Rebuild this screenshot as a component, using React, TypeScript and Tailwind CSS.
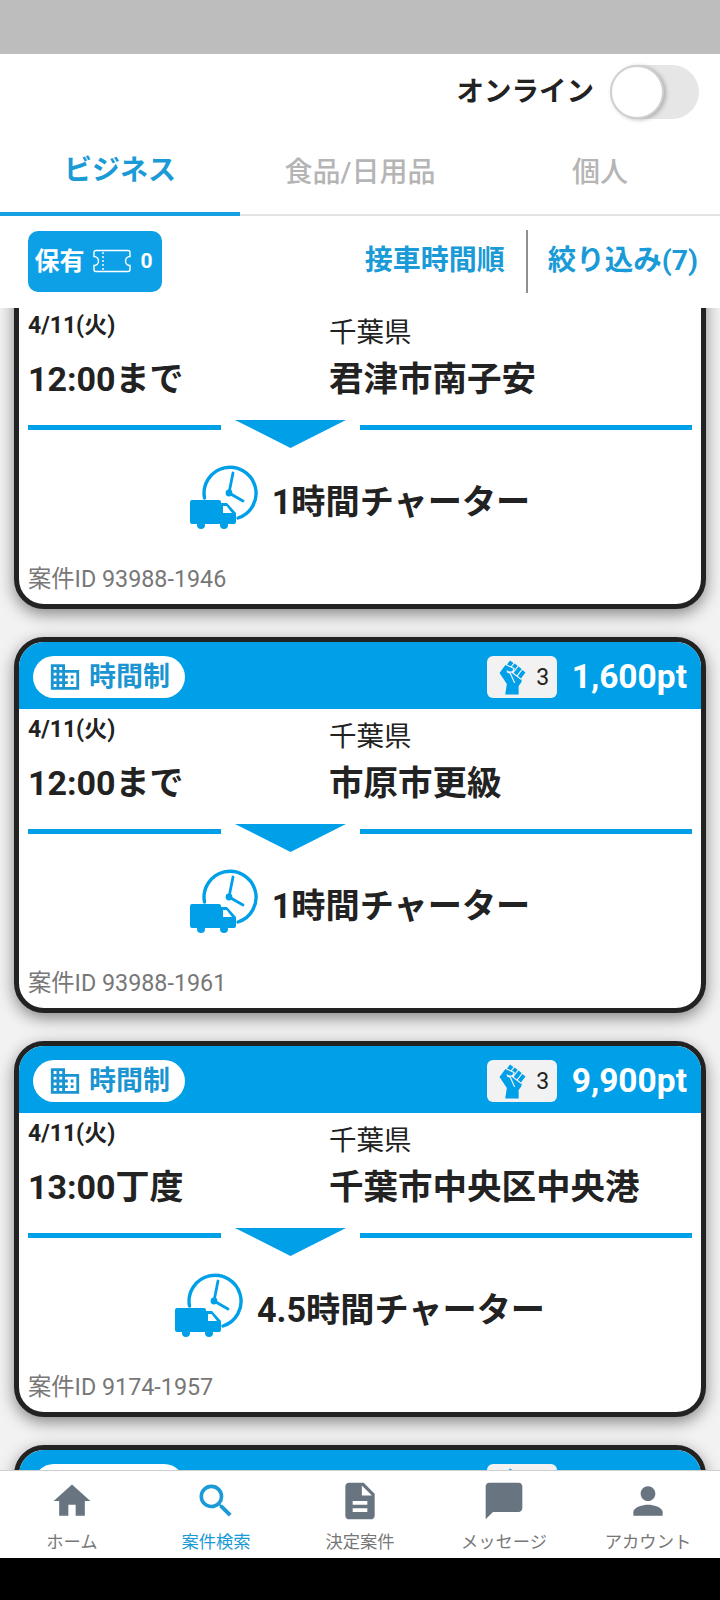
import React from "react";
import { GiFist } from "react-icons/gi";
import {
  MdChatBubble,
  MdDescription,
  MdDomain,
  MdHome,
  MdPerson,
  MdSearch,
} from "react-icons/md";

const FONT = `font-['Roboto','Noto_Sans_CJK_JP',sans-serif]`;

type Job = {
  id: string;
  points: string;
  time: string;
  city: string;
  duration: string;
};

const jobs: Job[] = [
  { id: "93988-1946", points: "1,600pt", time: "12:00まで", city: "君津市南子安", duration: "1時間チャーター" },
  { id: "93988-1961", points: "1,600pt", time: "12:00まで", city: "市原市更級", duration: "1時間チャーター" },
  { id: "9174-1957", points: "9,900pt", time: "13:00丁度", city: "千葉市中央区中央港", duration: "4.5時間チャーター" },
  { id: "9174-1958", points: "9,900pt", time: "13:00丁度", city: "千葉市中央区中央港", duration: "4.5時間チャーター" },
];

const navItems = [
  { label: "ホーム", icon: MdHome, active: false },
  { label: "案件検索", icon: MdSearch, active: true },
  { label: "決定案件", icon: MdDescription, active: false },
  { label: "メッセージ", icon: MdChatBubble, active: false },
  { label: "アカウント", icon: MdPerson, active: false },
];

const TicketIcon = () => (
  <svg width="42" height="24" viewBox="0 0 42 24" fill="none" stroke="white" strokeWidth="1.4">
    <path d="M5 1.500h32a2 2 0 0 1 2 2v4a4.500 4.500 0 0 0 0 9v4a2 2 0 0 1-2 2H5a2 2 0 0 1-2-2v-4a4.500 4.500 0 0 0 0-9v-4a2 2 0 0 1 2-2z" />
    <path d="M12 3v18" strokeDasharray="2 2" />
  </svg>
);

const CharterIcon = () => (
  <svg width="70" height="64" viewBox="0 0 70 64" className="shrink-0">
    <path
      d="M14.500 33A26 26 0 1 1 48 53"
      fill="none"
      stroke="#00A0E9"
      strokeWidth="3.400"
      strokeLinecap="round"
    />
    <path
      d="M43 8 L39 28 L53 36"
      fill="none"
      stroke="#00A0E9"
      strokeWidth="2.800"
      strokeLinecap="round"
      strokeLinejoin="round"
    />
    <circle cx="39" cy="28" r="3.400" fill="#00A0E9" />
    <path
      d="M2 35h27a2 2 0 0 1 2 2v1h6l9 10v9a2 2 0 0 1-2 2H2a2 2 0 0 1-2-2V37a2 2 0 0 1 2-2z"
      fill="#00A0E9"
    />
    <path d="M33 41h3.500l5.500 7h-9z" fill="white" />
    <circle cx="11" cy="60" r="4" fill="#00A0E9" />
    <circle cx="34" cy="60" r="4" fill="#00A0E9" />
  </svg>
);

const JobCard = ({ job }: { job: Job }) => (
  <div className="h-[376px] shrink-0 overflow-hidden rounded-[30px] border-[5px] border-[#222] bg-white shadow-[0_5px_16px_rgba(0,0,0,0.45)]">
    <div className="flex h-[67px] items-center justify-between bg-[#00A0E9] px-[14px] pt-[3px]">
      <div className="flex h-[42px] w-[152px] items-center justify-center gap-[7px] rounded-full bg-white text-[#1a95d2]">
        <MdDomain size={34} className="text-[#1a95d2]" />
        <span className="text-[27px] font-bold leading-none">時間制</span>
      </div>
      <div className="flex items-center gap-[15px]">
        <div className="flex h-[42px] w-[70px] items-center justify-center gap-[5px] rounded-[6px] bg-[#f2f2f2]">
          <GiFist size={37} className="text-[#00A0E9]" />
          <span className="text-[23px] leading-none text-[#222]">3</span>
        </div>
        <span className="text-[33.500px] font-bold leading-none text-white">{job.points}</span>
      </div>
    </div>
    <div className="flex h-[115px] px-[9px] text-[#222]">
      <div className="w-[301px] shrink-0">
        <p className="mt-[8px] text-[23px] font-bold leading-[26px]">4/11(火)</p>
        <p className="mt-[20px] text-[34px] font-bold leading-[40px]">{job.time}</p>
      </div>
      <div>
        <p className="mt-[12px] text-[27.500px] leading-[32px]">千葉県</p>
        <p className="mt-[9px] text-[34.500px] font-bold leading-[42px]">{job.city}</p>
      </div>
    </div>
    <div className="flex h-[28px] items-start px-[9px]">
      <div className="mt-[5px] h-[5px] w-[193px] bg-[#00A0E9]" />
      <svg width="111" height="28" viewBox="0 0 111 28" className="mx-[14px] shrink-0">
        <path d="M0 0H111L55.500 28z" fill="#00A0E9" />
      </svg>
      <div className="mt-[5px] h-[5px] flex-1 bg-[#00A0E9]" />
    </div>
    <div className="mt-[16px] flex h-[66px] items-center justify-center gap-[12px] text-[#222]">
      <CharterIcon />
      <span className="mt-[11px] text-[34.200px] font-bold leading-none">{job.duration}</span>
    </div>
    <p className="mt-[33px] px-[9px] text-[23.300px] leading-[32px] text-[#777]">案件ID {job.id}</p>
  </div>
);

export default function App() {
  return (
    <div className={`${FONT} flex h-[1600px] w-[720px] flex-col overflow-hidden bg-white`}>
      <div className="h-[54px] shrink-0 bg-[#bdbdbd]" />

      <header className="relative z-10 shrink-0 bg-white">
        <div className="flex h-[77px] items-center justify-end gap-[16px] pb-[2px] pr-[21px]">
          <span className="text-[27.500px] font-bold leading-none text-[#222]">オンライン</span>
          <div className="flex h-[54px] w-[89px] items-center rounded-full bg-[#e6e6e6]">
            <div className="h-[54px] w-[54px] rounded-full border-2 border-[#d0d0d0] bg-white shadow-[2px_1px_4px_rgba(0,0,0,0.25)]" />
          </div>
        </div>
        <div className="flex h-[85px] border-b-2 border-[#e3e3e3]">
          <div className="-mb-[2px] flex w-[240px] items-center justify-center border-b-[4px] border-[#14a0e3] pb-[2px] text-[28px] font-bold text-[#1a9ad6]">
            ビジネス
          </div>
          <div className="flex w-[240px] items-center justify-center text-[28px] font-medium text-[#b5b5b5]">
            食品/日用品
          </div>
          <div className="flex w-[240px] items-center justify-center text-[28px] font-medium text-[#b5b5b5]">
            個人
          </div>
        </div>
        <div className="flex h-[92px] items-center justify-between pb-[2px] pl-[28px] pr-[22px]">
          <div className="flex h-[61px] w-[134px] items-center justify-center gap-[7px] rounded-[10px] bg-[#0ea0e6] pr-[3px] text-white">
            <span className="text-[25px] font-bold leading-none">保有</span>
            <TicketIcon />
            <span className="text-[21px] font-bold leading-none">0</span>
          </div>
          <div className="flex items-center text-[#1a9ad6]">
            <span className="text-[28px] font-bold leading-none">接車時間順</span>
            <div className="ml-[21px] mr-[20px] h-[63px] w-[2px] bg-[#8f8f8f]" />
            <span className="text-[28.500px] font-bold leading-none">絞り込み(7)</span>
          </div>
        </div>
      </header>

      <main className="flex min-h-0 flex-1 flex-col overflow-hidden bg-[#f2f2f2] px-[14px]">
        <div className="-mt-[75px] flex flex-col gap-[28px]">
          {jobs.map((job) => (
            <JobCard key={job.id} job={job} />
          ))}
        </div>
      </main>

      <nav className="relative z-10 flex h-[88px] shrink-0 border-t border-[#cfcfcf] bg-white">
        {navItems.map(({ label, icon: Icon, active }) => (
          <div
            key={label}
            className={`flex w-[144px] flex-col items-center pt-[8px] ${active ? "text-[#1a9ad6]" : "text-[#68747f]"}`}
          >
            <Icon size={44} />
            <span className={`mt-[7px] text-[17.300px] leading-[24px] ${active ? "text-[#1a9ad6]" : "text-[#777]"}`}>
              {label}
            </span>
          </div>
        ))}
      </nav>
      <div className="h-[42px] shrink-0 bg-black" />
    </div>
  );
}
